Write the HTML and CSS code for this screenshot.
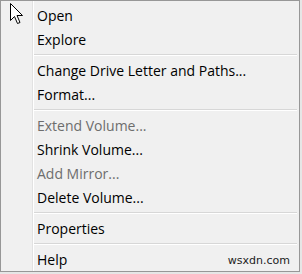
FILE: index.html
```html
<!DOCTYPE html>
<html>
<head>
<meta charset="utf-8">
<link rel="stylesheet" href="styles.css">
</head>
<body>
<div class="menu">
  <div class="item">Open</div>
  <div class="item">Explore</div>
  <div class="sep"></div>
  <div class="item">Change Drive Letter and Paths...</div>
  <div class="item">Format...</div>
  <div class="sep"></div>
  <div class="item disabled">Extend Volume...</div>
  <div class="item">Shrink Volume...</div>
  <div class="item disabled">Add Mirror...</div>
  <div class="item">Delete Volume...</div>
  <div class="sep"></div>
  <div class="item">Properties</div>
  <div class="sep"></div>
  <div class="item last"><span>Help</span><span class="watermark">wsxdn.com</span></div>
  <svg class="cursor" width="14" height="22" viewBox="0 0 14 22">
    <path d="M0.5 0.5 L0.5 17.5 L4.5 13.5 L7.5 20.5 L10 19.5 L7 12.5 L12.5 12.5 Z" fill="#fff" stroke="#000" stroke-width="1" stroke-linejoin="miter"/>
  </svg>
</div>
</body>
</html>
```
FILE: styles.css
```css
html, body {
  margin: 0;
  padding: 0;
  background: #e6e6e6;
}
body {
  width: 302px;
  height: 274px;
  overflow: hidden;
}
.menu {
  position: relative;
  box-sizing: border-box;
  width: 300px;
  height: 272px;
  border: 1px solid #979797;
  background: #f0f0f0 linear-gradient(to right, transparent 31px, #e2e2e2 31px, #e2e2e2 32px, #ffffff 32px, #ffffff 33px, transparent 33px);
  padding: 2px 2px 0 2px;
  font-family: "Open Sans", "Noto Sans", sans-serif;
  font-size: 14px;
  color: #000;
}
.item {
  height: 24px;
  line-height: 25px;
  padding-left: 34px;
  white-space: nowrap;
}
.item.last {
  display: flex;
  justify-content: space-between;
  align-items: baseline;
  padding-right: 7px;
}
.item.disabled {
  color: #6d6d6d;
}
.sep {
  height: 7px;
  margin-left: 31px;
  background: linear-gradient(to bottom, transparent 3px, #d7d7d7 3px, #d7d7d7 4px, #ffffff 4px, #ffffff 5px, transparent 5px);
}
.watermark {
  position: relative;
  top: -1px;
  font-family: "DejaVu Sans", sans-serif;
  font-size: 11px;
  color: #222;
}
.cursor {
  position: absolute;
  left: 9px;
  top: 2px;
}
```
